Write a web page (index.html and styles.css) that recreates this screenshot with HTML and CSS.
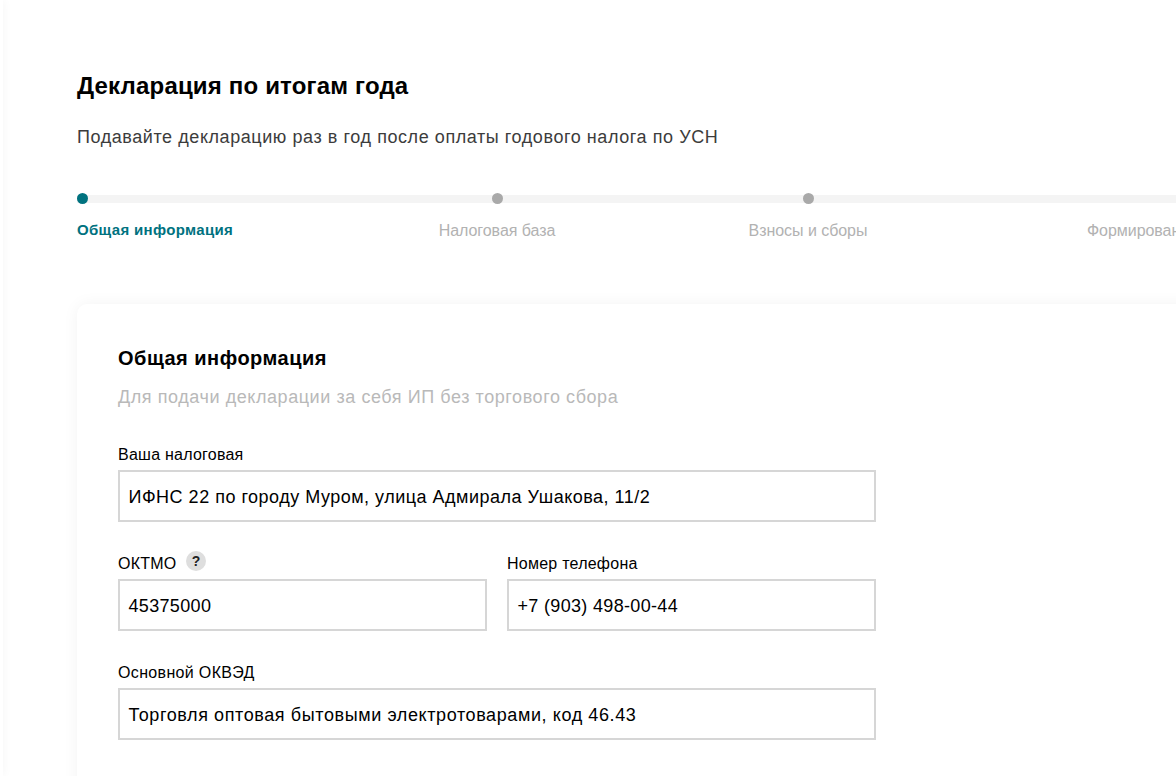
FILE: index.html
```html
<!DOCTYPE html>
<html lang="ru">
<head>
<meta charset="utf-8">
<title>Декларация по итогам года</title>
<link rel="stylesheet" href="styles.css">
</head>
<body>
<div class="page">
  <aside class="rail"></aside>
  <main class="main">
    <h1 class="title">Декларация по итогам года</h1>
    <p class="lead">Подавайте декларацию раз в год после оплаты годового налога по УСН</p>
    <div class="stepper">
      <div class="step step-first step-active"><span class="dot"></span><span class="step-label">Общая информация</span></div>
      <div class="step"><span class="dot"></span><span class="step-label">Налоговая база</span></div>
      <div class="step"><span class="dot"></span><span class="step-label">Взносы и сборы</span></div>
      <div class="step step-last"><span class="step-label">Формирование декларации</span></div>
    </div>
    <section class="card">
      <h2 class="card-title">Общая информация</h2>
      <p class="card-sub">Для подачи декларации за себя ИП без торгового сбора</p>
      <form class="form">
        <div class="field">
          <div class="label">Ваша налоговая</div>
          <div class="input">ИФНС 22 по городу Муром, улица Адмирала Ушакова, 11/2</div>
        </div>
        <div class="row">
          <div class="field">
            <div class="label">ОКТМО<span class="hint">?</span></div>
            <div class="input input-num">45375000</div>
          </div>
          <div class="field">
            <div class="label">Номер телефона</div>
            <div class="input input-num">+7 (903) 498-00-44</div>
          </div>
        </div>
        <div class="field">
          <div class="label label-wide">Основной ОКВЭД</div>
          <div class="input input-wide">Торговля оптовая бытовыми электротоварами, код 46.43</div>
        </div>
      </form>
    </section>
  </main>
</div>
</body>
</html>
```
FILE: styles.css
```css
* { box-sizing: border-box; }
html, body { margin: 0; height: 100%; overflow: hidden; background: #fff; }
body { font-family: "Liberation Sans", Arial, sans-serif; color: #000; }
.page { display: flex; height: 776px; overflow: hidden; }
.rail { flex: 0 0 3px; background: #fff; box-shadow: 0 0 8px rgba(0,0,0,.08); }
.main { flex: 0 0 1400px; padding: 71px 0 0 74px; }
.title { margin: 0; font-size: 24px; line-height: 30px; font-weight: 700; letter-spacing: .18px; }
.lead { margin: 24px 0 0; font-size: 18px; line-height: 24px; color: #3c3c3c; letter-spacing: .57px; }
.stepper { position: relative; display: grid; grid-template-columns: 264.5px 311px 311px 1fr; margin-top: 42px; }
.stepper::before { content: ""; position: absolute; left: 0; right: 0; top: 4px; height: 8px; background: #f4f4f4; }
.step { position: relative; display: flex; flex-direction: column; align-items: center; color: #b2b2b2; }
.step-first { align-items: flex-start; }
.step-last { align-items: flex-start; padding: 30px 0 0 123.5px; }
.dot { width: 11px; height: 11px; border-radius: 50%; background: #a9a9a9; margin-top: 2px; }
.step-label { margin-top: 17px; font-size: 16px; line-height: 20px; letter-spacing: -.05px; white-space: nowrap; }
.step-last .step-label { margin-top: 0; }
.step-active { color: #00727f; }
.step-active .dot { background: #00727f; }
.step-active .step-label { margin-top: 16px; font-size: 15px; font-weight: 700; letter-spacing: .33px; }
.card { margin-top: 63px; width: 1200px; height: 600px; padding: 41px 41px 0; background: #fff; border-radius: 10px; box-shadow: 0 0 16px rgba(0,0,0,.05); }
.card-title { margin: 0; font-size: 20px; line-height: 26px; font-weight: 700; letter-spacing: .49px; }
.card-sub { margin: 14px 0 0; font-size: 18px; line-height: 24px; color: #b9b9b9; letter-spacing: .57px; }
.form { display: flex; flex-direction: column; gap: 31px; width: 758px; margin-top: 35px; }
.row { display: grid; grid-template-columns: 369px 369px; column-gap: 20px; }
.label { display: flex; align-items: center; height: 20px; padding-top: 2px; margin-bottom: 6px; font-size: 16px; line-height: 18px; letter-spacing: .24px; }
.label-wide { letter-spacing: .34px; }
.input { height: 52px; padding: 0 8.5px; border: 2px solid #d6d6d6; font-size: 18px; line-height: 50px; letter-spacing: .5px; white-space: nowrap; }
.input-num { letter-spacing: .33px; }
.input-wide { letter-spacing: .6px; }
.hint { display: inline-flex; align-items: center; justify-content: center; width: 20px; height: 20px; margin: -7px 0 0 9.5px; border-radius: 50%; background: #dedede; font-size: 14px; font-weight: 700; letter-spacing: 0; color: #222; }
```
